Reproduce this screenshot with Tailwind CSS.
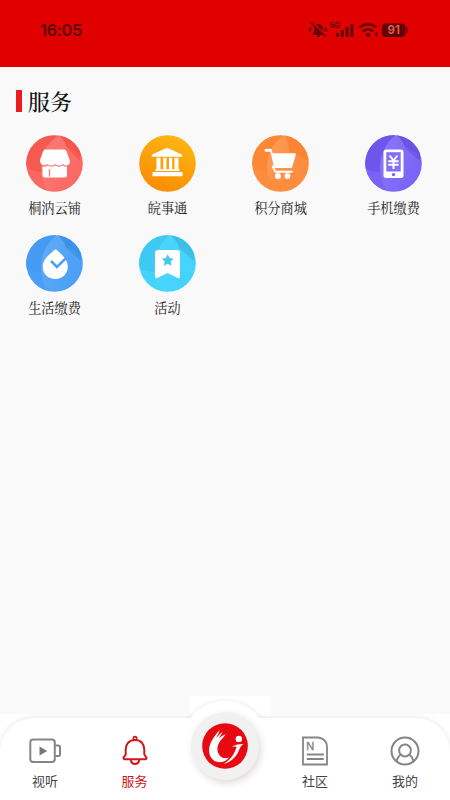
<!DOCTYPE html>
<html lang="zh-CN">
<head>
<meta charset="utf-8">
<meta name="viewport" content="width=device-width, initial-scale=1">
<title>服务</title>
<script src="https://cdn.jsdelivr.net/npm/@tailwindcss/browser@4"></script>
</head>
<body class="bg-[#f9f9f9]">
<div class="relative flex h-[800px] w-[450px] flex-col overflow-hidden bg-[#f9f9f9] font-['Liberation_Sans','Noto_Sans_CJK_SC',sans-serif]">

  <!-- Status bar -->
  <header class="flex h-[67px] shrink-0 items-start justify-between bg-[#e10000] pt-[18px] pr-[40px] pl-[40px] text-[#5f0505]">
    <span class="font-['Inter',sans-serif] text-[16.500px] leading-[25px] font-semibold tracking-[-0.4px]">16:05</span>
    <svg class="mt-[1px] h-[22px] w-[102px]" viewBox="0 0 102 22" fill="none">
      <g stroke="#5f0505">
        <path d="M5 15.500c1.500-1.300 1.800-3 1.800-5.500 0-2.500 1-4.500 3.700-4.500s3.700 2 3.700 4.500c0 2.500.3 4.200 1.800 5.500z" fill="#5f0505"/>
        <path d="M9 17.200h3" stroke-width="1.500"/>
        <path d="M2.500 8v5M.7 9.500v3M17 8v5M18.800 9.500v3" stroke-width="1"/>
        <path d="M3.500 3.500l15 14" stroke="#e10000" stroke-width="3"/>
        <path d="M2.500 3.500l15 14" stroke-width="1.400"/>
      </g>
      <text x="21.500" y="8.500" font-family="Inter,sans-serif" font-size="8" font-weight="700" fill="#5f0505" textLength="10.500" lengthAdjust="spacingAndGlyphs">5G</text>
      <g fill="#5f0505">
        <rect x="28" y="14" width="3" height="4" rx=".7"/>
        <rect x="32.800" y="11" width="3" height="7" rx=".7"/>
        <rect x="37.600" y="8" width="3" height="10" rx=".7"/>
        <rect x="42.400" y="5" width="3" height="13" rx=".7"/>
        <circle cx="60" cy="16" r="2"/>
        <rect x="67.500" y="13" width="1.800" height="4.500" rx=".8"/>
        <rect x="74" y="4.500" width="23.500" height="13.500" rx="4"/>
        <rect x="98.200" y="8.500" width="1.400" height="5.500" rx=".7"/>
      </g>
      <path d="M51.500 8.500c5-4.500 12-4.500 17 0M54.800 12.300c3-2.700 7.400-2.700 10.400 0" stroke="#5f0505" stroke-width="2.300"/>
      <text x="85.700" y="15.400" text-anchor="middle" font-family="Inter,sans-serif" font-size="11.500" font-weight="700" fill="#dc5a4a">91</text>
    </svg>
  </header>

  <main class="flex-1 font-['Noto_Serif_CJK_SC','Noto_Serif_SC','Source_Han_Serif_SC','Noto_Sans_CJK_SC',serif]">
    <h1 class="mt-[18px] ml-[16px] flex h-[32px] items-center gap-[6px] text-[22px] leading-[32px] font-medium text-[#111]">
      <span class="h-[22px] w-[6px] bg-[#ea1c20]"></span>服务
    </h1>

    <section class="mt-[18px] ml-[26px] grid grid-cols-[repeat(4,57px)] gap-x-[56px] gap-y-[23px] text-[13.200px] leading-[20px] text-[#1c1c1c]">
      <a class="flex h-[77px] flex-col items-center gap-[6px] whitespace-nowrap">
        <svg class="size-[57px] shrink-0" viewBox="0 0 57 57">
          <defs>
            <clipPath id="disc"><circle cx="28.500" cy="28.500" r="28.300"/></clipPath>
            <linearGradient id="fade" x1="0" y1="0" x2="1" y2=".6"><stop stop-color="#fff" stop-opacity=".14"/><stop offset="1" stop-color="#fff" stop-opacity="0"/></linearGradient>
          </defs>
          <g clip-path="url(#disc)">
            <path fill="#fb6862" d="M0 0h57v57H0z"/>
            <path fill="#f65950" d="M0 31c5 4 10 6 15 6C14 24 20 8 33 1L15 0 0 12z"/>
            <path fill="#f4564d" d="M32 0c5 4 8 8 9 13l13 13V0z"/>
            <path fill="url(#fade)" d="M33 0c-13 7-19 21-18 35 1 11 4 17 8 23h34V25C52 17 44 13 40 11c-1-4-3-8-7-11z"/>
          </g>
          <path fill="#fff" d="M19.500 14.500h18c1.500 0 2.400.6 3 2l3 8c1.200 3.500-.7 6-3.300 6-1.600 0-2.700-.6-3.600-1.500-2 2-5.200 2-7.500 0-2.200 2-5.400 2-7.500 0-3.500 2.600-8.300.6-7.500-4.500l3-8c.5-1.400 1.200-2 2.400-2z"/>
          <path fill="#fff" d="M16.500 31.500c2 .5 3.800.2 5.200-.9 2.200 1.500 5.100 1.500 7.500 0 2.400 1.500 5.200 1.500 7.500 0 1.300 1 2.800 1.300 4.300 1V40c0 1.700-.9 2.500-2.500 2.500H19c-1.700 0-2.500-.8-2.500-2.500z"/>
          <path d="M23.500 34v7.500" stroke="#fb7d73" stroke-width="1.300"/>
        </svg>
        <span>桐汭云铺</span>
      </a>
      <a class="flex h-[77px] flex-col items-center gap-[6px] whitespace-nowrap">
        <svg class="size-[57px] shrink-0" viewBox="0 0 57 57">
          <defs><linearGradient id="amber" x1=".7" y1="0" x2=".3" y2="1"><stop stop-color="#fdb713"/><stop offset="1" stop-color="#fb8b02"/></linearGradient></defs>
          <circle cx="28.500" cy="28.500" r="28.300" fill="url(#amber)"/>
          <path fill="#fff" d="M28 12.700l14.800 6.800c.8.500.6 2.300-.5 2.300H13.700c-1.100 0-1.300-1.800-.5-2.300zM17.500 22.800h4v12.700h-5.300l1.300-1.500zM24.200 22.800h3.200v12.700h-3.200zM30 22.800h3.200v12.700H30zM35.500 22.800h4V34l1.300 1.500h-5.300zM16.500 34.300h24v1.600h-24zM13.500 37h30v4.300h-30z"/>
        </svg>
        <span>皖事通</span>
      </a>
      <a class="flex h-[77px] flex-col items-center gap-[6px] whitespace-nowrap">
        <svg class="size-[57px] shrink-0" viewBox="0 0 57 57">
          <g clip-path="url(#disc)">
            <path fill="#fd8c3e" d="M0 0h57v57H0z"/>
            <path fill="#fc8735" d="M0 31c5 4 10 6 15 6C14 24 20 8 33 1L15 0 0 12z"/>
            <path fill="#fa8433" d="M32 0c3 5 5 10 5 17l20 9V0z"/>
            <path fill="url(#fade)" d="M33 0c-13 7-19 21-18 35 1 5 2 8 4 11 17 2 32-5 38-19V25C52 19 44 17 37 17c0-7-1-12-4-17z"/>
          </g>
          <path fill="#fff" d="M14 13.700h4.200c1 0 1.500.5 1.700 1.500l.6 3h22.300c.8 0 1.200.7 1 1.500l-3.600 12.200c-.2.800-.7 1.200-1.600 1.200H23.700c-1 0-1.600-.4-1.800-1.400l-3.500-14.900H14c-2 0-2-3.100 0-3.100z"/>
          <path d="M20.800 31.500l2.400 5.200h16.600" fill="none" stroke="#fff" stroke-width="2" stroke-linejoin="round" stroke-linecap="round"/>
          <circle cx="26" cy="41" r="2.900" fill="#fff"/><circle cx="35.500" cy="41" r="2.900" fill="#fff"/>
        </svg>
        <span>积分商城</span>
      </a>
      <a class="flex h-[77px] flex-col items-center gap-[6px] whitespace-nowrap">
        <svg class="size-[57px] shrink-0" viewBox="0 0 57 57">
          <g clip-path="url(#disc)">
            <path fill="#7863f6" d="M0 0h57v57H0z"/>
            <path fill="#6e55ec" d="M0 33c5 3 10 4 15 4C14 24 20 8 31 0H15L0 12z"/>
            <path fill="#6b51e4" d="M31 0c5 4 8 8 9 13l15 13V0z"/>
            <path fill="url(#fade)" d="M31 0C20 8 14 21 15 35c1 11 4 17 8 23h34V25C52 17 44 13 40 12c-1-4-4-9-9-12z"/>
          </g>
          <rect x="18.500" y="14.500" width="20" height="28.500" rx="2.800" fill="#fff"/>
          <path fill="#8370fa" d="M21.300 17.200h14.400v19.300H21.300z"/>
          <circle cx="28.500" cy="39.600" r="1.700" fill="#745ff4"/>
          <path d="M24.500 20.500l4 5 4-5M23.300 26.200h10.400M23.300 29.700h10.400M28.500 25.500v8.500" fill="none" stroke="#fff" stroke-width="2"/>
        </svg>
        <span>手机缴费</span>
      </a>
      <a class="flex h-[77px] flex-col items-center gap-[6px] whitespace-nowrap">
        <svg class="size-[57px] shrink-0" viewBox="0 0 57 57">
          <g clip-path="url(#disc)">
            <path fill="#499ff7" d="M0 0h57v57H0z"/>
            <path fill="#459af2" d="M0 33c5 3 10 4 15 4C14 24 20 8 31 0H15L0 12z"/>
            <path fill="#3c92ea" d="M31 0c5 4 8 8 9 13l15 13V0z"/>
            <path fill="url(#fade)" d="M31 0C20 8 14 21 15 35c1 11 4 17 8 23h34V25C52 17 44 13 40 12c-1-4-4-9-9-12z"/>
          </g>
          <path fill="#fff" d="M28 15.300c1-1 2.200-1 3.200 0 4 3.800 10.600 9 10.600 16.200 0 7.500-5.400 12.500-12.600 12.500s-12.500-5-12.500-12.500c0-7.200 7-12.200 11.300-16.200z"/>
          <path d="M25 26l6 6 8.700-8.700" fill="none" stroke="#4a9ff5" stroke-width="2.500"/>
        </svg>
        <span>生活缴费</span>
      </a>
      <a class="flex h-[77px] flex-col items-center gap-[6px] whitespace-nowrap">
        <svg class="size-[57px] shrink-0" viewBox="0 0 57 57">
          <g clip-path="url(#disc)">
            <path fill="#43d3fd" d="M0 0h57v57H0z"/>
            <path fill="#3fc9f2" d="M0 33c5 3 10 4 15 4C14 24 20 8 31 0H15L0 12z"/>
            <path fill="#3bbfe6" d="M31 0c5 4 8 8 9 13l15 13V0z"/>
            <path fill="url(#fade)" opacity=".4" d="M31 0C20 8 14 21 15 35c1 11 4 17 8 23h34V25C52 17 44 13 40 12c-1-4-4-9-9-12z"/>
          </g>
          <path fill="#fff" d="M19 15h19c2 0 3 1 3 3v23.500c0 1.500-1 2-2.200 1.400L28.500 38l-10.300 4.900c-1.200.6-2.200.1-2.200-1.400V18c0-2 1-3 3-3z"/>
          <path fill="#45c8ef" d="M28.700 19.300l1.900 3.800 4.200.6-3.100 2.900.8 4.200-3.800-2-3.800 2 .8-4.200-3.100-2.900 4.200-.6z"/>
        </svg>
        <span>活动</span>
      </a>
    </section>
  </main>

  <!-- Tab bar -->
  <footer class="relative h-[86px] shrink-0 bg-white">
    <div class="absolute top-[-18px] left-[189px] h-[24px] w-[82px] bg-white"></div>
    <div class="absolute top-[-13px] left-[180px] size-[90px] rounded-full bg-white shadow-[0_-1px_5px_rgba(0,0,0,0.07)]"></div>
    <div class="absolute inset-x-0 top-[4px] h-[120px] rounded-t-[34px] bg-white shadow-[0_-1px_5px_rgba(0,0,0,0.09)]"></div>
    <div class="absolute top-[-12px] left-[181px] size-[88px] rounded-full bg-white"></div>
    <nav class="relative grid h-full grid-cols-5 text-[13px] leading-[18px] text-[#444]">
      <a class="flex flex-col items-center pt-[20px]">
        <svg class="h-[34px] w-[34px]" viewBox="0 0 34 34" fill="none" stroke="#858585" stroke-width="2">
          <rect x="2.300" y="5.500" width="24.500" height="22.500" rx="3"/>
          <path d="M27.500 11.500h2.900c1 0 1.600.5 1.600 1.500v7.500c0 1-.6 1.500-1.600 1.500h-2.900"/>
          <path d="M11.500 12.500l7.700 4.500-7.700 4.500z" fill="#777" stroke="none"/>
        </svg>
        <span class="mt-[5px]">视听</span>
      </a>
      <a class="flex flex-col items-center pt-[20px] pr-[1px] text-[#c9161c]">
        <svg class="h-[34px] w-[34px]" viewBox="0 0 34 34" fill="none" stroke="#cf161c" stroke-width="2" stroke-linejoin="round">
          <path d="M17 6c6 0 9.300 4.200 9.300 9.500v5l2 2.800c.6 1-.1 2-1.200 2H6.900c-1.100 0-1.800-1-1.200-2l2-2.800v-5C7.700 10.200 11 6 17 6z"/>
          <circle cx="17" cy="4.300" r="1.700" stroke-width="1.600"/>
          <path d="M12.800 26c.4 2.700 2 4 4.200 4s3.800-1.300 4.200-4"/>
        </svg>
        <span class="mt-[5px]">服务</span>
      </a>
      <a class="relative">
        <span class="absolute top-[-2px] left-[11px] grid size-[68px] place-items-center rounded-full bg-[#f1f1f1] shadow-[2px_3px_7px_rgba(90,50,50,0.18)]">
          <svg class="mr-[1px] size-[46px]" viewBox="110 116 136 136">
            <circle cx="178" cy="184" r="67.500" fill="#e70a10"/>
            <g fill="#fff">
              <path d="M131 194C133 174 143 160 162 137C160 147 155 155 151 161C158 154 164 147 171 142C168 149 163 156 159 162C166 156 173 152 180 149C174 158 165 166 160 175C154 187 154 199 160 209C166 219 176 222 190 218C182 229 165 236 152 230C138 225 130 210 131 194Z"/>
              <circle cx="219" cy="163" r="9.500"/>
              <path d="M198 187C208 180 220 177 233 178C226 182 223 187 219 197C212 215 197 231 172 238C192 226 206 210 212 186C206 185 202 186 198 187Z"/>
            </g>
          </svg>
        </span>
      </a>
      <a class="flex flex-col items-center pt-[20px]">
        <svg class="h-[34px] w-[34px]" viewBox="0 0 34 34" fill="none" stroke="#858585" stroke-width="1.800">
          <path d="M5 3.500h15.500c5 1 8.200 4 8.500 9V30.500H5z"/>
          <path d="M8.800 20.500h17M8.800 25h17" stroke-width="2"/>
          <text x="8.300" y="15.800" font-family="Liberation Sans,sans-serif" font-size="11" fill="#858585" stroke="#858585" stroke-width=".4">N</text>
        </svg>
        <span class="mt-[5px]">社区</span>
      </a>
      <a class="flex flex-col items-center pt-[20px]">
        <svg class="h-[34px] w-[34px]" viewBox="0 0 34 34" fill="none" stroke="#858585" stroke-width="2">
          <circle cx="17" cy="17" r="13.500"/>
          <circle cx="17" cy="16.500" r="5.900"/>
          <path d="M8.500 27.500c.8-3.500 2.500-6 5-7.500M25.500 27.500c-.8-3.500-2.500-6-5-7.500"/>
        </svg>
        <span class="mt-[5px]">我的</span>
      </a>
    </nav>
  </footer>
</div>
</body>
</html>
